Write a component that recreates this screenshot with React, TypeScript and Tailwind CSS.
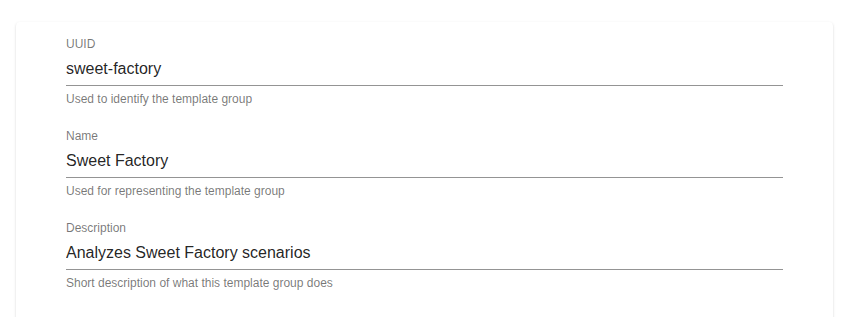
const fields = [
  {
    label: "UUID",
    value: "sweet-factory",
    helper: "Used to identify the template group",
  },
  {
    label: "Name",
    value: "Sweet Factory",
    helper: "Used for representing the template group",
  },
  {
    label: "Description",
    value: "Analyzes Sweet Factory scenarios",
    helper: "Short description of what this template group does",
  },
];

function Field({ label, value, helper }: { label: string; value: string; helper: string }) {
  return (
    <div className="mb-[22px] w-[717px]">
      <label className="block text-[12px] leading-[15px] text-black/[0.54]">
        {label}
      </label>

      <div className="mt-[1px] border-b border-black/[0.42]">
        <input
          readOnly
          value={value}
          className="block h-[32px] w-full bg-transparent pt-[6px] pb-[7px] text-[16px] leading-[19px] text-black/[0.87] outline-none"
        />
      </div>

      <p className="mt-[6px] text-[12px] leading-[15px] text-black/[0.54]">
        {helper}
      </p>
    </div>
  );
}

export default function App() {
  return (
    <div
      className="min-h-screen bg-white pt-[22px]"
      style={{ fontFamily: "'Liberation Sans', Arial, sans-serif" }}
    >
      <div className="ml-[16px] w-[817px] rounded-[4px] bg-white pl-[50px] pt-[15px] pb-[40px] shadow-[0px_2px_1px_-1px_rgba(0,0,0,0.2),0px_1px_1px_0px_rgba(0,0,0,0.14),0px_1px_3px_0px_rgba(0,0,0,0.12)]">
        {fields.map((f) => (
          <Field key={f.label} {...f} />
        ))}
      </div>
    </div>
  );
}
